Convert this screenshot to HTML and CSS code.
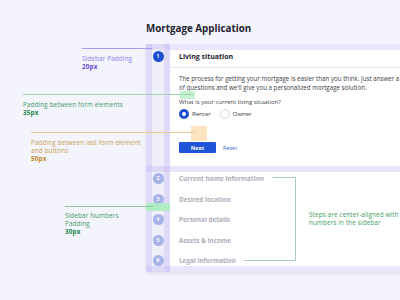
FILE: index.html
```html
<!DOCTYPE html>
<html>
<head>
<meta charset="utf-8">
<link rel="stylesheet" href="styles.css">
</head>
<body>
<div class="page">
  <h1 class="title">Mortgage Application</h1>
  <div class="card">
    <div class="band"></div>
    <div class="row">
      <div class="side"><span class="num num-active">1</span></div>
      <div class="main">
        <div class="head">Living situation</div>
        <div class="body">
          <p class="intro">The process for getting your mortgage is easier than you think. Just answer a few<br>of questions and we'll give you a personalized mortgage solution.</p>
          <div class="label">What is your current living situation?</div>
          <div class="radios">
            <span class="radio"><span class="dot dot-on"></span>Renter</span>
            <span class="radio"><span class="dot"></span>Owner</span>
          </div>
          <div class="actions">
            <span class="btn">Next</span>
            <span class="reset">Reset</span>
          </div>
        </div>
      </div>
    </div>
    <div class="band"></div>
    <div class="steps">
      <div class="step"><span class="num">2</span><span class="step-name">Current home information</span></div>
      <div class="step"><span class="num">3</span><span class="step-name">Desired location</span></div>
      <div class="step"><span class="num">4</span><span class="step-name">Personal details</span></div>
      <div class="step"><span class="num">5</span><span class="step-name">Assets &amp; income</span></div>
      <div class="step"><span class="num">6</span><span class="step-name">Legal information</span></div>
    </div>
    <div class="band"></div>
    <div class="vcol vcol-a"></div>
    <div class="vcol vcol-b"></div>
  </div>
</div>

<div class="hl hl-green1"></div>
<div class="hl hl-orange"></div>
<div class="hl hl-green2"></div>

<div class="line line-purple"></div>
<div class="note note-purple">Sidebar Padding<b>20px</b></div>

<div class="line line-green1"></div>
<div class="note note-green1">Padding between form elements<b>35px</b></div>

<div class="line line-orange"></div>
<div class="note note-orange">Padding between last form element<br>and buttons<b>50px</b></div>

<div class="line line-green2"></div>
<div class="note note-green2">Sidebar Numbers<br>Padding<b>30px</b></div>

<div class="bracket"></div>
<div class="bracket-top"></div>
<div class="note note-steps">Steps are center-aligned with circle<br>numbers in the sidebar</div>
</body>
</html>
```
FILE: styles.css
```css
html, body {
  margin: 0;
  padding: 0;
  width: 400px;
  height: 300px;
  overflow: hidden;
}
body {
  background: #f3f4fc;
  font-family: "Open Sans", "DejaVu Sans", sans-serif;
  color: #333;
  position: relative;
}
.page {
  padding: 21px 0 0 146px;
}
.title {
  margin: 0 0 8px 0;
  font-size: 9.8px;
  line-height: 15px;
  font-weight: 700;
  color: #1f2330;
}
.card {
  position: relative;
  width: 300px;
  background: linear-gradient(to right, #eeeff8 24px, #fff 24px);
  box-shadow: 0 2px 4px rgba(60, 60, 110, 0.10);
  display: flex;
  flex-direction: column;
}
.band {
  height: 6px;
  background: rgba(196, 180, 246, 0.35);
}
.vcol {
  position: absolute;
  top: 0;
  bottom: 0;
  width: 6px;
  background: rgba(196, 180, 246, 0.35);
}
.vcol-a { left: 0; }
.vcol-b { left: 18px; }
.row {
  display: grid;
  grid-template-columns: 24px 1fr;
}
.side {
  display: flex;
  justify-content: center;
  padding-top: 1px;
}
.num {
  width: 11px;
  height: 11px;
  border-radius: 50%;
  background: #a8b3ea;
  color: #fff;
  font-size: 5px;
  font-weight: 700;
  display: flex;
  align-items: center;
  justify-content: center;
  line-height: 1;
}
.num-active {
  background: #1c4fcf;
}
.head {
  height: 17px;
  border-bottom: 1px solid #e8e8ef;
  padding-left: 9px;
  font-size: 7px;
  font-weight: 700;
  color: #1f2330;
  line-height: 13px;
}
.body {
  padding: 6px 0 13px 9px;
}
.intro {
  margin: 0;
  font-size: 6.2px;
  line-height: 9px;
  color: #3a3d48;
  white-space: nowrap;
}
.label {
  margin-top: 6px;
  font-size: 6px;
  line-height: 8px;
  color: #3a3d48;
}
.radios {
  display: flex;
  gap: 9px;
  margin-top: 3px;
  height: 10px;
  align-items: center;
}
.radio {
  display: flex;
  align-items: center;
  gap: 3px;
  font-size: 6px;
  color: #3a3d48;
}
.dot {
  width: 8px;
  height: 8px;
  border-radius: 50%;
  border: 1px solid #d4d4dc;
  background: #fff;
}
.dot-on {
  width: 4px;
  height: 4px;
  border: 3px solid #1c4fcf;
}
.actions {
  margin-top: 23px;
  display: flex;
  align-items: center;
  gap: 7px;
}
.btn {
  width: 37px;
  height: 11px;
  background: #1f55d6;
  color: #fff;
  font-size: 5.5px;
  font-weight: 700;
  border-radius: 1px;
  display: flex;
  align-items: center;
  justify-content: center;
}
.reset {
  font-size: 5.5px;
  color: #3e6ad6;
}
.steps {
  display: flex;
  flex-direction: column;
  gap: 9.5px;
  padding-top: 1px;
}
.step {
  display: grid;
  grid-template-columns: 24px 1fr;
  align-items: center;
  height: 11px;
}
.step .num {
  justify-self: center;
}
.step-name {
  padding-left: 9px;
  font-size: 6.4px;
  font-weight: 700;
  color: #adadb9;
}

/* annotation layer */
.hl {
  position: absolute;
}
.hl-green1 {
  left: 180px; top: 91px; width: 15px; height: 8px;
  background: rgba(183, 239, 200, 0.8);
}
.hl-orange {
  left: 191px; top: 126px; width: 16px; height: 15px;
  background: rgba(253, 225, 185, 0.9);
}
.hl-green2 {
  left: 146px; top: 203px; width: 24px; height: 8px;
  background: rgba(170, 236, 190, 0.9);
}
.line {
  position: absolute;
  height: 1px;
}
.line-purple { left: 82px; top: 48px; width: 70px; background: #a89cf0; }
.line-green1 { left: 23px; top: 94px; width: 170px; background: #9fd3b2; }
.line-orange { left: 31px; top: 132px; width: 164px; background: #e7cc94; }
.line-green2 { left: 65px; top: 206px; width: 88px; background: #8cc6a2; }
.note {
  position: absolute;
  font-size: 6.3px;
  line-height: 8px;
  letter-spacing: 0.15px;
  white-space: nowrap;
}
.note b {
  display: block;
  font-weight: 700;
}
.note-purple { left: 82px; top: 55px; color: #8d7ce8; }
.note-purple b { color: #6a4ce0; }
.note-green1 { left: 23px; top: 101px; color: #3f9a63; }
.note-green1 b { color: #22874a; }
.note-orange { left: 31px; top: 139px; color: #c9a04d; }
.note-orange b { color: #c28a1c; }
.note-green2 { left: 65px; top: 212px; color: #3f9a63; }
.note-green2 b { color: #22874a; }
.note-steps { left: 309px; top: 211px; color: #3f9a63; }
.bracket {
  position: absolute;
  left: 244px; top: 177px; width: 51px; height: 83px;
  border-right: 1px solid #a8cdb8;
  border-bottom: 1px solid #a8cdb8;
}
.bracket-top {
  position: absolute;
  left: 273px; top: 177px; width: 23px; height: 1px;
  background: #a8cdb8;
}
```
